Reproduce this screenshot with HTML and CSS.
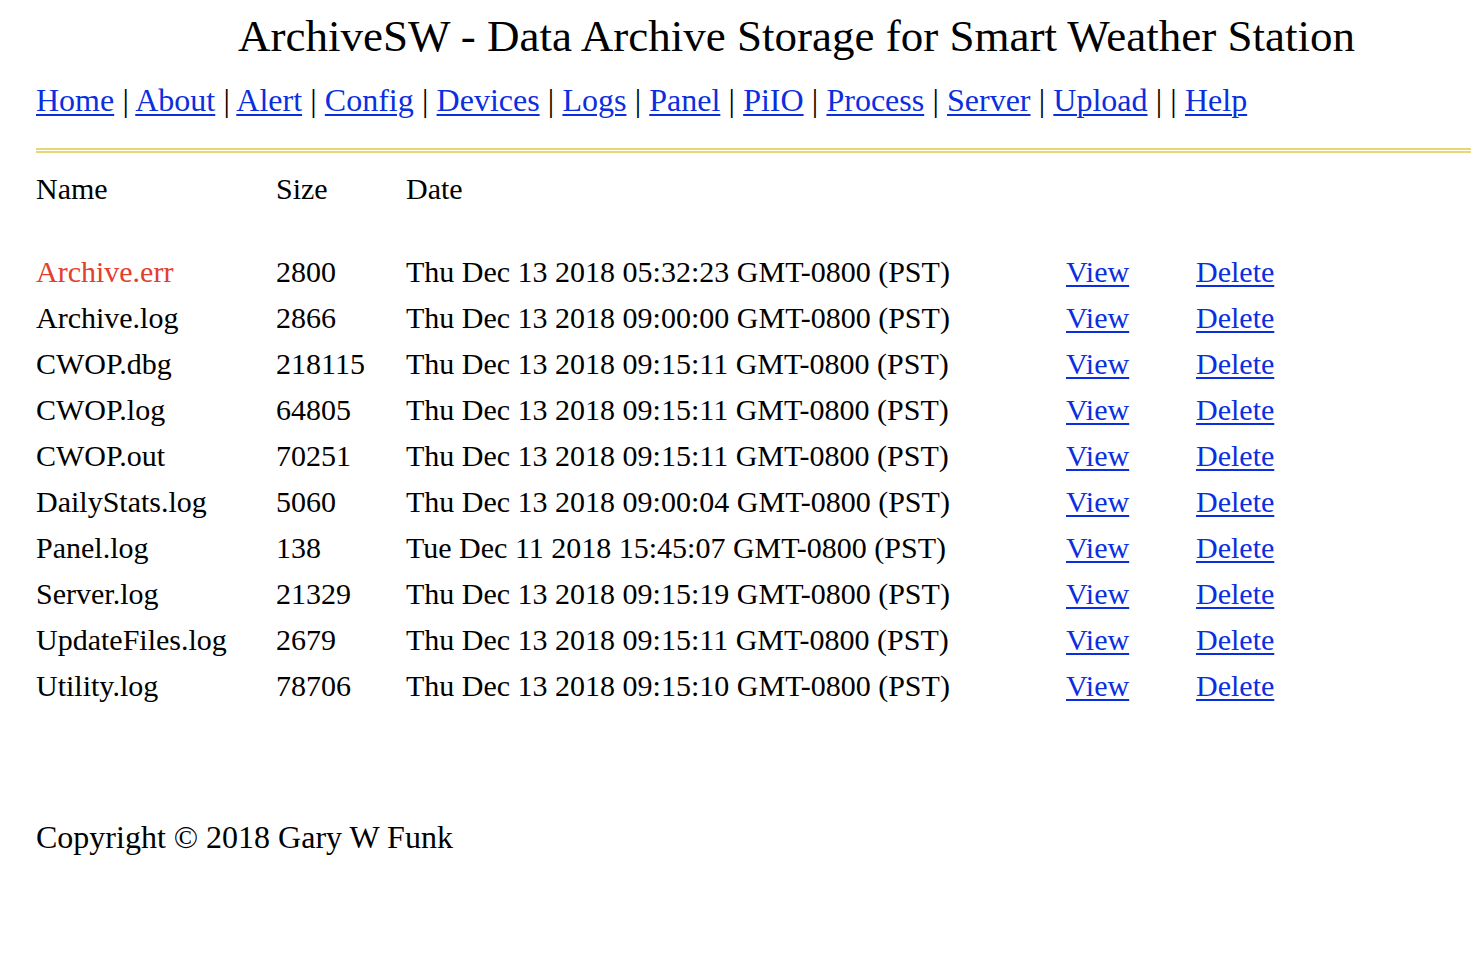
FILE: index.html
```html
<!DOCTYPE html>
<html lang="en">
<head>
    <meta charset="UTF-8">
    <title>ArchiveSW</title>
    <link rel="stylesheet" href="styles.css">
</head>
<body>
    <div class="page">
        <div class="title">ArchiveSW - Data Archive Storage for Smart Weather Station</div>

        <div class="nav">
            <a href="#">Home</a> | <a href="#">About</a> | <a href="#">Alert</a> | <a href="#">Config</a> | <a href="#">Devices</a> | <a href="#">Logs</a> | <a href="#">Panel</a> | <a href="#">PiIO</a> | <a href="#">Process</a> | <a href="#">Server</a> | <a href="#">Upload</a> | | <a href="#">Help</a>
        </div>

        <div class="rule"></div>

        <table class="files">
            <thead>
                <tr>
                    <th class="col-name">Name</th>
                    <th class="col-size">Size</th>
                    <th class="col-date">Date</th>
                    <th class="col-view"></th>
                    <th class="col-del"></th>
                </tr>
            </thead>
            <tbody>
                <tr class="error">
                    <td>Archive.err</td><td>2800</td><td>Thu Dec 13 2018 05:32:23 GMT-0800 (PST)</td>
                    <td><a href="#">View</a></td><td><a href="#">Delete</a></td>
                </tr>
                <tr>
                    <td>Archive.log</td><td>2866</td><td>Thu Dec 13 2018 09:00:00 GMT-0800 (PST)</td>
                    <td><a href="#">View</a></td><td><a href="#">Delete</a></td>
                </tr>
                <tr>
                    <td>CWOP.dbg</td><td>218115</td><td>Thu Dec 13 2018 09:15:11 GMT-0800 (PST)</td>
                    <td><a href="#">View</a></td><td><a href="#">Delete</a></td>
                </tr>
                <tr>
                    <td>CWOP.log</td><td>64805</td><td>Thu Dec 13 2018 09:15:11 GMT-0800 (PST)</td>
                    <td><a href="#">View</a></td><td><a href="#">Delete</a></td>
                </tr>
                <tr>
                    <td>CWOP.out</td><td>70251</td><td>Thu Dec 13 2018 09:15:11 GMT-0800 (PST)</td>
                    <td><a href="#">View</a></td><td><a href="#">Delete</a></td>
                </tr>
                <tr>
                    <td>DailyStats.log</td><td>5060</td><td>Thu Dec 13 2018 09:00:04 GMT-0800 (PST)</td>
                    <td><a href="#">View</a></td><td><a href="#">Delete</a></td>
                </tr>
                <tr>
                    <td>Panel.log</td><td>138</td><td>Tue Dec 11 2018 15:45:07 GMT-0800 (PST)</td>
                    <td><a href="#">View</a></td><td><a href="#">Delete</a></td>
                </tr>
                <tr>
                    <td>Server.log</td><td>21329</td><td>Thu Dec 13 2018 09:15:19 GMT-0800 (PST)</td>
                    <td><a href="#">View</a></td><td><a href="#">Delete</a></td>
                </tr>
                <tr>
                    <td>UpdateFiles.log</td><td>2679</td><td>Thu Dec 13 2018 09:15:11 GMT-0800 (PST)</td>
                    <td><a href="#">View</a></td><td><a href="#">Delete</a></td>
                </tr>
                <tr>
                    <td>Utility.log</td><td>78706</td><td>Thu Dec 13 2018 09:15:10 GMT-0800 (PST)</td>
                    <td><a href="#">View</a></td><td><a href="#">Delete</a></td>
                </tr>
            </tbody>
        </table>

        <div class="footer">Copyright &copy; 2018 Gary W Funk</div>
    </div>
</body>
</html>
```

FILE: styles.css
```css
* {
    margin: 0;
    padding: 0;
    box-sizing: border-box;
}

body {
    font-family: 'Liberation Serif', 'Times New Roman', serif;
    background-color: #ffffff;
    color: #000000;
    overflow: hidden;
}

a {
    color: #0a2ee0;
    text-decoration: underline;
    text-decoration-thickness: 2px;
    text-underline-offset: 3px;
}

.page {
    padding-left: 36px;
}

.title {
    font-size: 45px;
    line-height: 72px;
    padding-left: 202px;
    white-space: nowrap;
}

.nav {
    font-size: 32px;
    line-height: 56px;
    word-spacing: 0.2px;
    white-space: nowrap;
}

.rule {
    margin-top: 20px;
    height: 5px;
    border-top: 2px solid #e6d774;
    border-bottom: 2px solid #e6d774;
    margin-right: -10px;
}

.files {
    border-collapse: collapse;
    font-size: 30px;
    margin-top: 19px;
}

.files th {
    font-weight: normal;
    text-align: left;
    height: 46px;
    padding-bottom: 43px;
    vertical-align: top;
}

.files td {
    height: 46px;
    padding: 0;
    white-space: nowrap;
}

.col-name { width: 240px; }
.col-size { width: 130px; }
.col-date { width: 660px; }
.col-view { width: 130px; }
.col-del  { width: 130px; }

.files .error td:first-child {
    color: #e2402f;
}

.footer {
    font-size: 32px;
    line-height: 36px;
    margin-top: 110px;
}
```
